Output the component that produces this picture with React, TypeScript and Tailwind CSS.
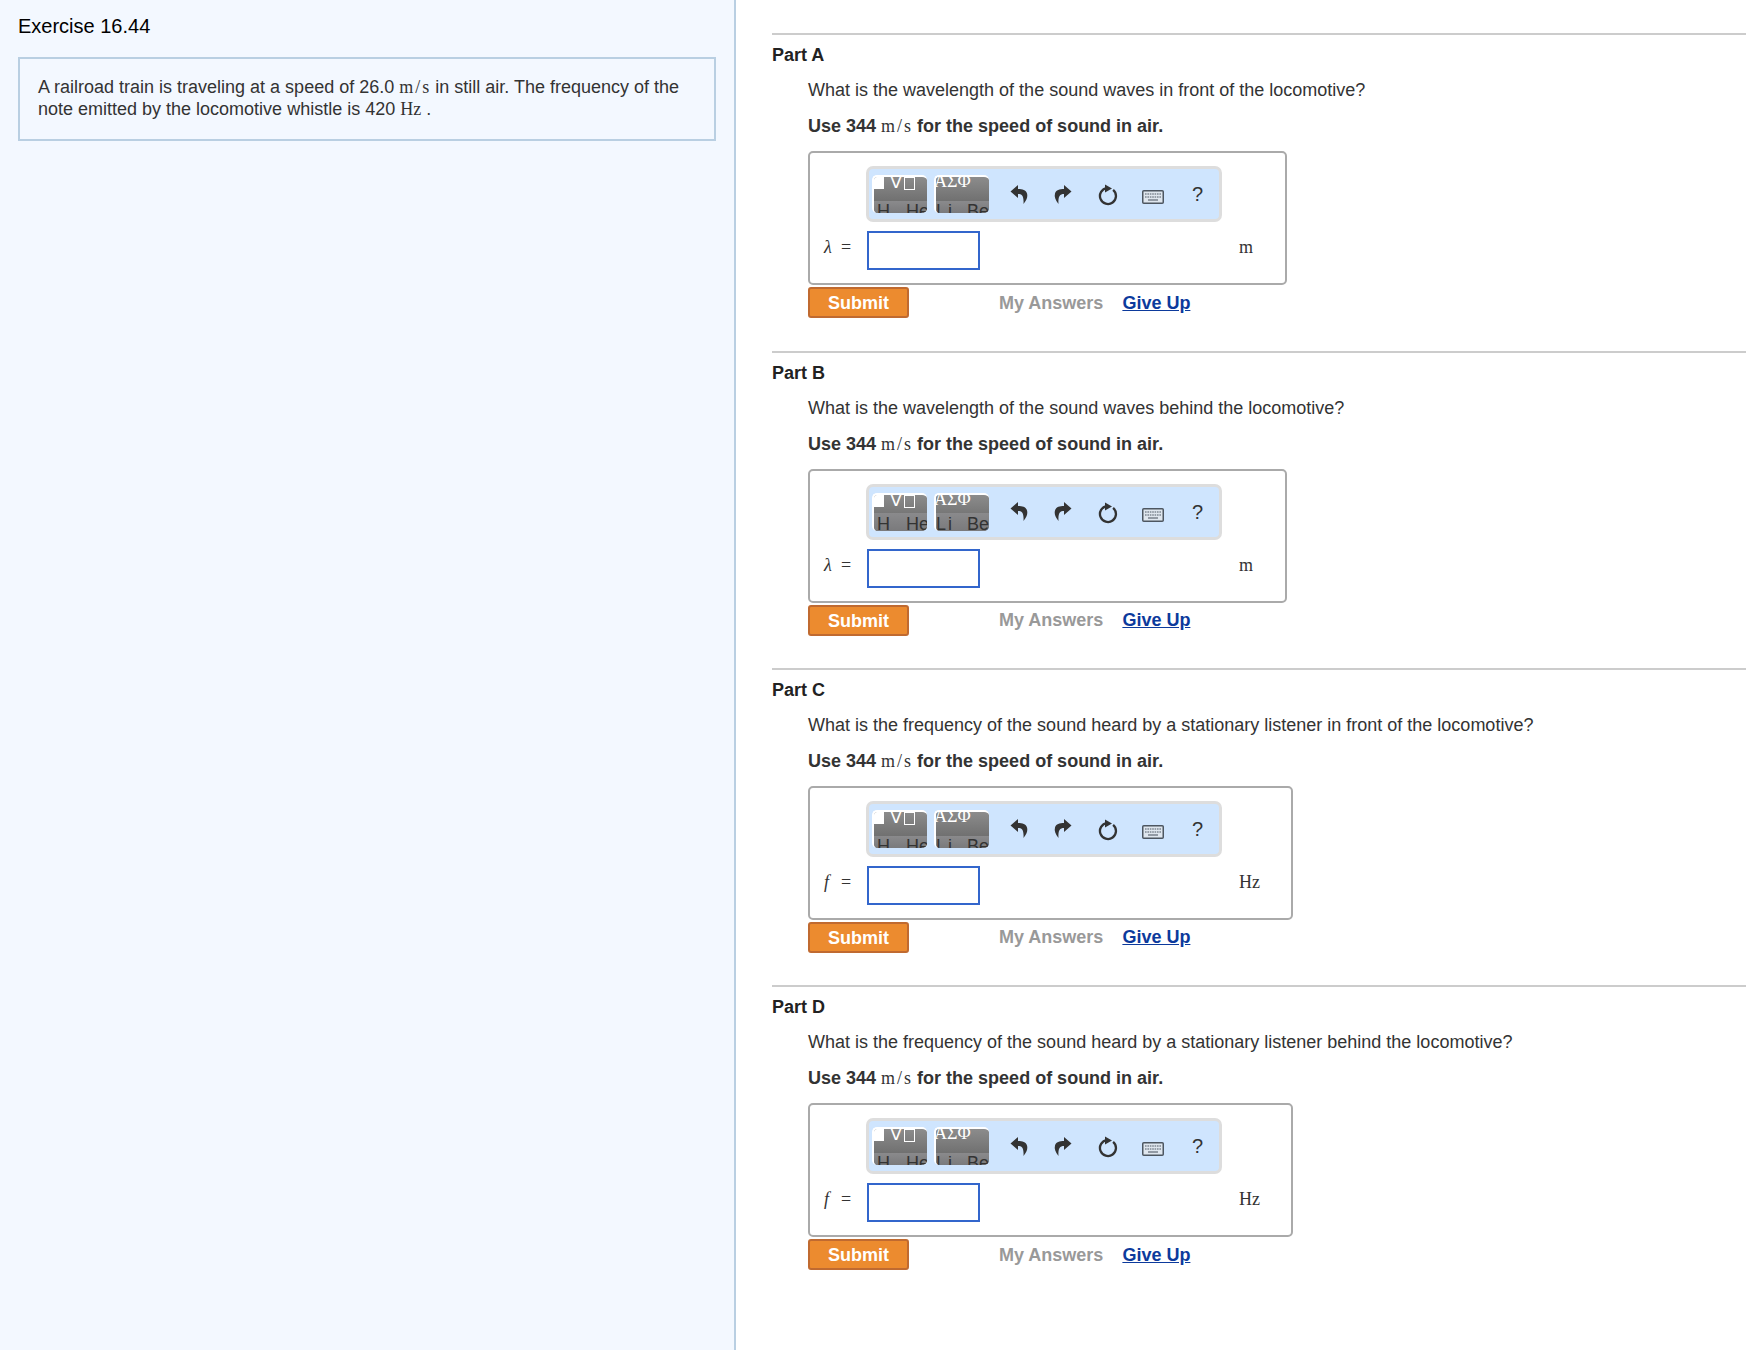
const sans = 'font-["Liberation_Sans",Arial,sans-serif]';
const serif = 'font-["Liberation_Serif","Times_New_Roman",serif]';

function Speed() {
  return (
    <span className={`${serif} font-normal text-[18px] mr-[1px]`}>
      m<span className="mx-[2px]">/</span>s
    </span>
  );
}

function PaletteButton({ first, tall }: { first?: boolean; tall?: boolean }) {
  return (
    <div className="relative w-[55px] h-[38px] rounded-[5px] overflow-hidden border-t-2 border-l-2 border-white bg-gradient-to-b from-[#8c8c8c] to-[#636363]">
      <div className={`absolute left-0 right-0 bottom-0 bg-gradient-to-b from-[#8a8a8c] to-[#7a7a7c] ${tall ? 'h-[18px]' : 'h-[12px]'}`} />
      {first ? (
        <>
          <div className="absolute left-0 top-0 w-[10px] h-[12px] bg-white" />
          <div className={`absolute left-[16px] -top-[5px] text-[18px] leading-[20px] text-white ${serif}`}>∇</div>
          <div className="absolute left-[30px] top-0 w-[11px] h-[13px] border border-white" />
          <div className={`absolute left-[3px] ${tall ? '-bottom-[3px]' : '-bottom-[8px]'} flex gap-[16px] text-[18px] leading-[20px] text-[#333] ${sans} whitespace-nowrap`}>
            <span>H</span>
            <span>He</span>
          </div>
        </>
      ) : (
        <>
          <div className={`absolute -left-[2px] -top-[6px] text-[18px] leading-[20px] text-white ${serif} whitespace-nowrap`}>ΑΣΦ</div>
          <div className={`absolute left-0 ${tall ? '-bottom-[3px]' : '-bottom-[8px]'} flex text-[18px] leading-[20px] text-[#333] ${sans} whitespace-nowrap`}>
            <span className="w-[31px] tracking-[2px]">Li</span>
            <span>Be</span>
          </div>
        </>
      )}
    </div>
  );
}

function UndoIcon({ flip }: { flip?: boolean }) {
  return (
    <svg width="18" height="21" viewBox="0 0 18 21" className={flip ? '-scale-x-100' : ''}>
      <path
        d="M8 1 L0.5 7.5 L8 14 L8 10 C12 10 14 12 13.5 20 C16.5 16 18 13 17 9.5 C16 6 12.5 5 8 5 Z"
        fill="#333"
      />
    </svg>
  );
}

function ResetIcon() {
  return (
    <svg width="20" height="26" viewBox="0 0 20 26">
      <path d="M15.1 8.9 A8 8 0 1 1 9 7.1" fill="none" stroke="#333" strokeWidth="2.3" />
      <path d="M7 3.5 L7 11.5 L14 7.5 Z" fill="#333" />
    </svg>
  );
}

function KeyboardIcon() {
  return (
    <svg width="22" height="14" viewBox="0 0 22 14" className="mt-[6px] -translate-x-[1px]">
      <rect x="0.75" y="0.75" width="20.5" height="12.5" rx="1" fill="#dfe6ee" stroke="#4d5661" strokeWidth="1.5" />
      <path d="M3 4 H19" stroke="#7f8892" strokeWidth="1.6" strokeDasharray="1.6 0.8" />
      <path d="M3 7 H19" stroke="#7f8892" strokeWidth="1.6" strokeDasharray="1.6 0.8" />
      <path d="M6 10 H16" stroke="#7f8892" strokeWidth="1.6" />
    </svg>
  );
}

function Toolbar({ tall }: { tall?: boolean }) {
  return (
    <div className="ml-[56px] w-[356px] h-[56px] rounded-[7px] border-[3px] border-[#dddddd] bg-[#cfe5fe] flex items-center pl-[3px]">
      <div className="flex gap-[7px]">
        <PaletteButton first tall={tall} />
        <PaletteButton tall={tall} />
      </div>
      <div className="ml-[21px] w-[18px] flex justify-center"><UndoIcon /></div>
      <div className="ml-[26px] w-[18px] flex justify-center"><UndoIcon flip /></div>
      <div className="ml-[26px] w-[20px] flex justify-center"><ResetIcon /></div>
      <div className="ml-[25px] w-[22px] flex justify-center"><KeyboardIcon /></div>
      <div className={`ml-[27px] text-[20px] text-[#333] ${sans}`}>?</div>
    </div>
  );
}

function Part({ label, question, symbol, unit, wide, tall }: { label: string; question: string; symbol: string; unit: string; wide?: boolean; tall?: boolean }) {
  return (
    <section className="h-[317.3px] border-t-2 border-[#cccccc]">
      <h3 className="mt-[9px] text-[18px] leading-[22px] font-bold text-[#222]">{label}</h3>
      <div className="ml-[36px]">
        <p className="mt-[13px] text-[18px] leading-[22px] text-[#333]">{question}</p>
        <p className="mt-[14px] text-[18px] leading-[22px] font-bold text-[#333]">
          Use 344 <Speed /> for the speed of sound in air.
        </p>
        <div className={`mt-[14px] h-[134px] rounded-[5px] border-2 border-[#aaaaaa] pt-[13px] ${wide ? 'w-[485px]' : 'w-[479px]'}`}>
          <Toolbar tall={tall} />
          <div className="mt-[9px] flex items-center">
            <div className={`w-[57px] pl-[14px] pb-[6px] flex text-[18px] text-[#333] ${serif}`}>
              <i className="w-[17px]">{symbol}</i>
              <span>=</span>
            </div>
            <div className="w-[113px] h-[39px] border-2 border-[#3366cc] bg-white" />
            <div className={`ml-[259px] pb-[6px] text-[18px] text-[#333] ${serif}`}>{unit}</div>
          </div>
        </div>
        <div className="mt-[2px] flex items-center">
          <button className="w-[101px] h-[31px] rounded-[3px] border-2 border-[#c06a30] bg-[#ec8b2f] pt-[1px] text-[18px] font-bold text-white">Submit</button>
          <span className="ml-[90px] pt-[1px] text-[18px] font-bold text-[#999999]">My Answers</span>
          <a className="ml-[19px] pt-[1px] text-[18px] font-bold text-[#0c3a9c] underline">Give Up</a>
        </div>
      </div>
    </section>
  );
}

export default function App() {
  return (
    <div className={`h-[1350px] w-[1746px] flex bg-white overflow-hidden ${sans}`}>
      <aside className="w-[736px] shrink-0 border-r-2 border-[#b9cfe2] bg-[#f3f8ff] px-[18px] pt-[14px]">
        <h1 className="text-[20px] leading-[24px] text-black">Exercise 16.44</h1>
        <div className="mt-[19px] w-[698px] h-[84px] border-2 border-[#b9cfe2] px-[18px] pt-[17px] text-[18px] leading-[22px] text-[#333]">
          A railroad train is traveling at a speed of 26.0 <Speed /> in still air. The frequency of the note emitted by the locomotive whistle is 420 <span className={serif}>Hz</span> .
        </div>
      </aside>
      <main className="flex-1 pl-[36px] pt-[33.4px]">
        <Part label="Part A" question="What is the wavelength of the sound waves in front of the locomotive?" symbol="λ" unit="m" />
        <Part label="Part B" question="What is the wavelength of the sound waves behind the locomotive?" symbol="λ" unit="m" tall />
        <Part label="Part C" question="What is the frequency of the sound heard by a stationary listener in front of the locomotive?" symbol="f" unit="Hz" wide />
        <Part label="Part D" question="What is the frequency of the sound heard by a stationary listener behind the locomotive?" symbol="f" unit="Hz" wide />
      </main>
    </div>
  );
}
